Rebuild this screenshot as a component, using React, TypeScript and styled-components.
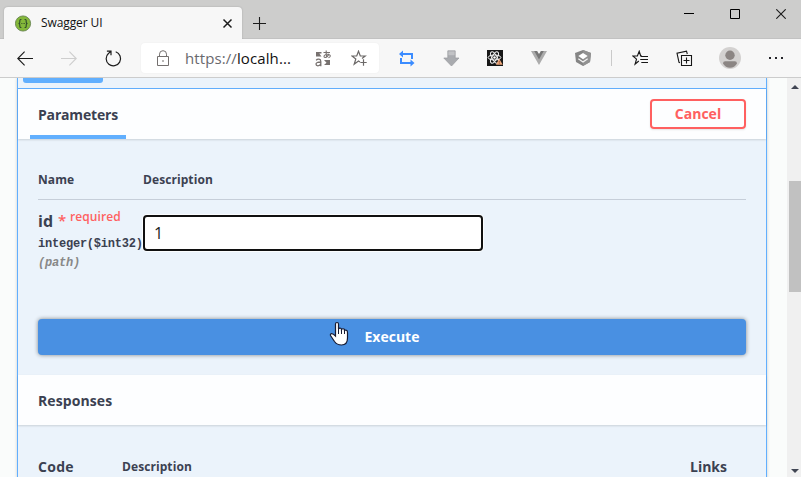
import React from "react";
import styled, { createGlobalStyle } from "styled-components";

const Global = createGlobalStyle`
  * { box-sizing: border-box; }
  html, body { margin: 0; padding: 0; overflow: hidden; }
  body { font-family: "Open Sans", "Noto Sans", sans-serif; color: #3b4151; }
`;

const Window = styled.div`
  width: 801px;
  height: 477px;
  display: flex;
  flex-direction: column;
  overflow: hidden;
  background: #f7f7f7;
`;

const TitleBar = styled.header`
  height: 39px;
  flex: none;
  display: flex;
  align-items: flex-start;
  background: #cdcdcc;
  padding-left: 4px;
  box-shadow: inset 0 -1px 0 #c2c2c2;
`;

const BrowserTab = styled.div`
  width: 238px;
  height: 32px;
  margin-top: 7px;
  padding: 0 9px 0 11px;
  display: flex;
  align-items: center;
  background: #f7f7f7;
  border-radius: 4px 4px 0 0;
  box-shadow: 0 0 2px rgba(0, 0, 0, 0.2);
`;

const TabTitle = styled.span`
  flex: 1;
  margin-left: 9px;
  font-size: 12px;
  line-height: 16px;
  letter-spacing: -0.1px;
  color: #111;
`;

const NewTab = styled.div`
  width: 34px;
  height: 32px;
  margin-top: 7px;
  display: grid;
  place-items: center;
`;

const WindowControls = styled.div`
  margin-left: auto;
  height: 27px;
  display: flex;
  margin-right: -3px;
`;

const ControlButton = styled.div`
  width: 46px;
  display: grid;
  place-items: center;
`;

const Toolbar = styled.nav`
  height: 39px;
  flex: none;
  display: flex;
  align-items: center;
  padding-left: 3px;
  border-bottom: 1px solid #cccccc;
  background: #f7f7f7;
`;

const ToolCell = styled.div<{ $w?: number }>`
  width: ${(p) => p.$w ?? 44}px;
  height: 38px;
  flex: none;
  display: grid;
  place-items: center;
`;

const AddressBar = styled.div`
  width: 238px;
  height: 30px;
  margin: 0 6px;
  padding-left: 15px;
  display: flex;
  align-items: center;
  flex: none;
  background: #fff;
  border-radius: 4px;
  box-shadow: 0 0 2px rgba(0, 0, 0, 0.06);
  svg { flex: none; }
`;

const Url = styled.span`
  flex: none;
  width: 130px;
  margin-left: 15px;
  font-size: 15px;
  line-height: 22px;
  letter-spacing: 0.1px;
  white-space: nowrap;
  color: #111;
  span { color: #69696e; }
`;

const Gap = styled.span<{ $w: number }>`
  width: ${(p) => p.$w}px;
  flex: none;
`;

const Divider = styled.div`
  width: 1px;
  height: 16px;
  background: #cacaca;
`;

const Viewport = styled.main`
  flex: 1;
  min-height: 0;
  display: flex;
  background: #fafcfb;
`;

const Page = styled.div`
  flex: 1;
  padding: 0 20px 0 17px;
  overflow: hidden;
`;

const Operation = styled.section`
  height: 480px;
  border: solid #61affe;
  border-width: 0 1px;
  background: #ebf3fb;
  box-shadow: 0 0 3px rgba(0, 0, 0, 0.19);
`;

const Summary = styled.div`
  height: 11px;
  padding-left: 5px;
  border-bottom: 1px solid #61affe;
`;

const MethodBadge = styled.div`
  width: 80px;
  height: 5px;
  border-radius: 0 0 3px 3px;
  background: #61affe;
`;

const SectionHeader = styled.div`
  height: 50px;
  padding: 0 20px;
  display: flex;
  align-items: center;
  justify-content: space-between;
  background: #fdfeff;
  box-shadow: 0 1px 2px rgba(0, 0, 0, 0.14);
`;

const SectionTab = styled.div`
  align-self: stretch;
  width: 96px;
  margin-left: -8px;
  padding-left: 8px;
  border-bottom: 4px solid #61affe;
`;

const Heading = styled.h4<{ $ls?: number }>`
  margin: 0;
  padding-top: 1px;
  font-size: 14px;
  font-weight: 700;
  line-height: 50px;
  letter-spacing: ${(p) => p.$ls ?? 0}px;
  white-space: nowrap;
`;

const CancelButton = styled.button`
  width: 96px;
  height: 30px;
  padding: 0;
  border: 2px solid #ff6060;
  border-radius: 4px;
  background: transparent;
  color: #ff6060;
  font: 700 14px/26px "Open Sans", sans-serif;
  box-shadow: 0 1px 2px rgba(0, 0, 0, 0.1);
`;

const Parameters = styled.div`
  height: 180px;
  padding: 20px 20px 0;
`;

const ColumnHeads = styled.div`
  height: 41px;
  display: grid;
  grid-template-columns: 105px 1fr;
  border-bottom: 1px solid #c6ced9;
  font-size: 12px;
  font-weight: 700;
  line-height: 41px;
  letter-spacing: 0.08px;
`;

const ParameterRow = styled.div`
  display: grid;
  grid-template-columns: 105px 1fr;
  padding-top: 10px;
`;

const ParameterName = styled.div`
  height: 25px;
  display: flex;
  font-size: 16px;
  font-weight: 700;
  line-height: 22px;
  white-space: nowrap;
`;

const Required = styled.span`
  display: flex;
  margin-left: 5px;
  color: #ff6060;
  font-size: 12px;
  font-weight: 600;
  line-height: 13px;
  letter-spacing: 0.08px;
`;

const Asterisk = styled.span`
  width: 12px;
  padding-top: 3px;
  font-size: 15px;
  line-height: 15px;
`;

const ParameterType = styled.div`
  font: 700 12px/18px "Liberation Mono", monospace;
  letter-spacing: -0.22px;
  white-space: nowrap;
`;

const ParameterIn = styled(ParameterType)`
  line-height: 20px;
  font-style: italic;
  color: #888;
`;

const ValueInput = styled.div`
  width: 340px;
  height: 36px;
  margin-top: 5px;
  padding-left: 9px;
  border: 2px solid #101010;
  border-radius: 4px;
  background: #fff;
  box-shadow: 0 0 0 1px rgba(255, 255, 255, 0.8);
  font: 400 16px/33px "Open Sans", sans-serif;
  color: #222;
`;

const ExecuteRow = styled.div`
  position: relative;
  height: 56px;
  padding: 0 20px 20px;
`;

const ExecuteButton = styled.button`
  display: block;
  width: 100%;
  height: 36px;
  padding: 0;
  border: 0;
  border-radius: 4px;
  background: #4990e2;
  color: #fff;
  font: 700 14px/36px "Open Sans", sans-serif;
  box-shadow: 0 0 4px rgba(0, 0, 0, 0.45);
`;

const Pointer = styled.svg`
  position: absolute;
  left: 311px;
  top: 2px;
`;

const ResponseHeads = styled.div`
  padding: 16px 39px 0 20px;
  display: grid;
  grid-template-columns: 84px 1fr auto;
`;

const SmallHeading = styled(Heading)`
  font-size: 12px;
`;

const Scrollbar = styled.aside`
  width: 14px;
  flex: none;
  display: flex;
  flex-direction: column;
  align-items: center;
  background: #f0f0f0;
  padding: 4px 0 1px 2px;
`;

const Thumb = styled.div`
  width: 12px;
  height: 111px;
  margin: 89px 0 auto;
  background: #c1c1c1;
`;

const Line = ({ w = 16, h = 16, d, c = "#1b1b1b", sw = 1.1 }: { w?: number; h?: number; d: string; c?: string; sw?: number }) => (
  <svg width={w} height={h} viewBox={`0 0 ${w} ${h}`} fill="none" stroke={c} strokeWidth={sw}>
    <path d={d} />
  </svg>
);

const SwaggerLogo = () => (
  <svg width="17" height="17" viewBox="0 0 17 17">
    <circle cx="8" cy="8.5" r="7.6" fill="#84b83a" stroke="#5d7a48" strokeWidth=".8" />
    <g fill="none" stroke="#2f4a2b" strokeWidth="1.1">
      <path d="M6.4 4.5H5.8Q4.8 4.5 4.8 5.8V7.2Q4.8 8.5 3.5 8.5Q4.8 8.5 4.8 9.8V11.2Q4.8 12.5 5.8 12.5H6.4M9.6 4.5H10.2Q11.2 4.5 11.2 5.8V7.2Q11.2 8.5 12.5 8.5Q11.2 8.5 11.2 9.8V11.2Q11.2 12.5 10.2 12.5H9.6" />
      <path d="M6.3 8.5H9.9" strokeDasharray=".8 .6" strokeWidth=".9" />
    </g>
  </svg>
);

const Reload = () => (
  <svg width="17" height="17" viewBox="0 0 17 17" fill="none" stroke="#1b1b1b" strokeWidth="1.2">
    <path d="M10.7 1.8A7.2 7.2 0 1 1 3.6 3.2M1.9 1.1H6V5.2M5.8 1.3L3.4 3.6" />
  </svg>
);

const Lock = () => (
  <svg width="14" height="17" viewBox="0 0 14 17" fill="none" stroke="#74706f">
    <path d="M1.5 6.5H12.5V15.5H1.5ZM3.5 6.5V4.2A3.5 3.5 0 0 1 10.5 4.2V6.5" />
    <path d="M6 10.5H8V11.5H6Z" fill="#74706f" stroke="none" />
  </svg>
);

const Translate = () => (
  <svg width="17" height="17" viewBox="0 0 17 17" fill="none" stroke="#77716f" strokeWidth="1.1">
    <path d="M8.5 2.5H15M11.2 .5Q10.8 5 12 7.4M14 3.8Q12.5 7.6 10.2 7.5Q8.6 7.2 9.2 5.7Q10.5 3.8 13.6 4.5Q16.2 5.3 14.8 7Q14.3 7.6 13.3 7.8" />
    <path d="M1.2 10.3Q2 9 4 9.2Q5.8 9.4 5.8 11.5V16.2M5.8 12Q1 12 1 14.1Q1 15.8 2.8 15.8Q5.2 15.8 5.8 13.8" strokeWidth="1.3" />
    <path d="M1 2H6.5V3.5H4.3L6.5 6.5H1ZM9 10H15V15H9L11.5 12.7Z" fill="#77716f" stroke="none" />
  </svg>
);

const StarPlus = () => (
  <svg width="17" height="17" viewBox="0 0 17 17" fill="none" stroke="#6b6867" strokeWidth="1.2">
    <path d="M9 12L7.5 11L3.2 14.2L4.8 9L.9 6H5.7L7.5 1.2L9.3 6H14.2L11 8.5M9.3 12.5H15.7M12.5 9.3V15.7" />
  </svg>
);

const Loop = () => (
  <svg width="16" height="17" viewBox="0 0 16 17" fill="none" stroke="#3b8cff" strokeWidth="2">
    <path d="M3 4H13V9M13 13H2V8" />
    <path d="M0 4L4 .5V7.5ZM15.5 13L11.5 9.5V16.5Z" fill="#3b8cff" stroke="none" />
  </svg>
);

const Download = () => (
  <svg width="17" height="17" viewBox="0 0 17 17">
    <path d="M4.8 .8H12.2V8H16L8.5 16L.8 8H4.8Z" fill="#a9abaf" stroke="#989a9e" strokeWidth=".7" />
    <path d="M5.4 1.4H11.6V5.2H5.4Z" fill="#c1c2c5" />
  </svg>
);

const ReactTools = () => (
  <svg width="16" height="16" viewBox="0 0 16 16">
    <rect width="16" height="16" fill="#171717" />
    <g fill="none" stroke="#f4f4f4" strokeWidth="1">
      <ellipse cx="7.5" cy="7.5" rx="6.4" ry="2.5" />
      <ellipse cx="7.5" cy="7.5" rx="6.4" ry="2.5" transform="rotate(60 7.5 7.5)" />
      <ellipse cx="7.5" cy="7.5" rx="6.4" ry="2.5" transform="rotate(120 7.5 7.5)" />
    </g>
    <circle cx="7.5" cy="7.5" r="1.3" fill="#fff" />
    <path d="M12.2 8.8L15.8 14.8H8.9Z" fill="#eda77b" />
    <path d="M12.3 10.8V12.7M12.3 13.3V14.2" stroke="#8b4d30" strokeWidth=".8" />
  </svg>
);

const VueTools = () => (
  <svg width="16" height="14" viewBox="0 0 16 14">
    <path d="M0 0H6L8 3.3L10 0H16L8 14Z" fill="#acacac" />
    <path d="M3.2 0H6L8 3.3L10 0H12.8L8 8.5Z" fill="#777" />
  </svg>
);

const ShieldTools = () => (
  <svg width="16" height="16" viewBox="0 0 16 16">
    <path d="M8 0L16 3L15 12L8 16L1 12L0 3Z" fill="#858585" />
    <path d="M8 0L16 3L15 12L8 16Z" fill="#929292" />
    <path d="M8 3L12.7 6L8 9.2L3.3 6Z" fill="#fff" />
    <path d="M3.3 8.7L8 11.9L12.7 8.7" fill="none" stroke="#f4f4f4" strokeWidth="1.2" />
  </svg>
);

const Favorites = () => (
  <svg width="17" height="17" viewBox="0 0 17 17" fill="none" stroke="#171717" strokeWidth="1.15">
    <path d="M6.8 11L3.1 14.1L4.5 9.1L.8 6H5.4L7.2 1.3L8.7 6H10M8.8 6.5H16M8.2 9.5H16M9.3 12.5H16" />
  </svg>
);

const Collections = () => (
  <svg width="17" height="17" viewBox="0 0 17 17" fill="none" stroke="#171717" strokeWidth="1.1">
    <path d="M5.5 5.5H15.5V15.5H5.5ZM10.5 7.5V13.5M7.5 10.5H13.5" />
    <path d="M4 12.7L3 12.3L1 3.2L10.5 1.1L11.3 4" />
  </svg>
);

const Avatar = () => (
  <svg width="22" height="22" viewBox="0 0 22 22">
    <circle cx="11" cy="11" r="11" fill="#d3d1d0" />
    <circle cx="11" cy="8.2" r="4.7" fill="#8b8583" />
    <path d="M4 16.5Q4 14.3 6.2 14.3H15.8Q18 14.3 18 16.5Q15.5 20.7 11 20.7Q6.5 20.7 4 16.5Z" fill="#8b8583" />
  </svg>
);

const Triangle = ({ d }: { d: string }) => (
  <svg width="8" height="10" viewBox="0 0 8 10"><path d={d} fill="#404553" /></svg>
);

export default function App() {
  return (
    <Window>
      <Global />
      <TitleBar>
        <BrowserTab>
          <SwaggerLogo />
          <TabTitle>Swagger UI</TabTitle>
          <Line w={11} h={11} d="M1.5 1.5L9.5 9.5M9.5 1.5L1.5 9.5" sw={1.5} />
        </BrowserTab>
        <NewTab><Line w={13} h={13} d="M6.5 0V13M0 6.5H13" /></NewTab>
        <WindowControls>
          <ControlButton><Line w={10} h={11} d="M0 5.5H10" sw={1} c="#000" /></ControlButton>
          <ControlButton><Line w={10} h={10} d="M.5 .5H9.5V9.5H.5Z" sw={1} c="#000" /></ControlButton>
          <ControlButton><Line w={10} h={10} d="M.3 .3L9.7 9.7M9.7 .3L.3 9.7" /></ControlButton>
        </WindowControls>
      </TitleBar>

      <Toolbar>
        <ToolCell><Line w={16} h={15} d="M16 7.5H1M7.6 .7L.8 7.5L7.6 14.3" /></ToolCell>
        <ToolCell><Line w={16} h={15} d="M0 7.5H15M8.4 .7L15.2 7.5L8.4 14.3" c="#cecece" /></ToolCell>
        <ToolCell><Reload /></ToolCell>
        <AddressBar>
          <Lock />
          <Url><span>https://</span>localh...</Url>
          <Translate />
          <Gap $w={19} />
          <StarPlus />
        </AddressBar>
        <ToolCell><Loop /></ToolCell>
        <ToolCell><Download /></ToolCell>
        <ToolCell><ReactTools /></ToolCell>
        <ToolCell><VueTools /></ToolCell>
        <ToolCell><ShieldTools /></ToolCell>
        <ToolCell $w={13}><Divider /></ToolCell>
        <ToolCell><Favorites /></ToolCell>
        <ToolCell><Collections /></ToolCell>
        <ToolCell $w={48}><Avatar /></ToolCell>
        <ToolCell $w={44}>
          <svg width="14" height="2" viewBox="0 0 14 2"><path d="M0 0H2V2H0ZM6 0H8V2H6ZM12 0H14V2H12Z" fill="#24242a" /></svg>
        </ToolCell>
      </Toolbar>

      <Viewport>
        <Page>
          <Operation>
            <Summary><MethodBadge /></Summary>
            <SectionHeader>
              <SectionTab><Heading $ls={-0.18}>Parameters</Heading></SectionTab>
              <CancelButton>Cancel</CancelButton>
            </SectionHeader>
            <Parameters>
              <ColumnHeads><span>Name</span><span>Description</span></ColumnHeads>
              <ParameterRow>
                <div>
                  <ParameterName>id<Required><Asterisk>*</Asterisk>required</Required></ParameterName>
                  <ParameterType>integer($int32)</ParameterType>
                  <ParameterIn>(path)</ParameterIn>
                </div>
                <ValueInput>1</ValueInput>
              </ParameterRow>
            </Parameters>
            <ExecuteRow>
              <ExecuteButton>Execute</ExecuteButton>
              <Pointer width="20" height="25" viewBox="0 0 20 25">
                <path d="M6.5 15V3Q6.5 1.5 8 1.5Q9.5 1.5 9.5 3V8Q10.2 6.6 11.7 7.2Q12.5 7.5 12.5 8.5Q13.5 7.3 15 8Q15.5 8.4 15.5 9.3Q17 8.6 18 9.7Q18.5 10.3 18.5 12V17Q18.5 24 12.5 24Q8 24 5.5 20.5L1.5 14.5Q1 13 2.5 12.6Q4 12.4 6.5 15Z" fill="#fff" stroke="#171b33" strokeWidth="1.2" />
                <path d="M9.5 7V13M12.5 8V13M15.5 9V13" stroke="#171b33" fill="none" />
              </Pointer>
            </ExecuteRow>
            <SectionHeader><Heading $ls={0.1}>Responses</Heading></SectionHeader>
            <ResponseHeads>
              <Heading $ls={0.3}>Code</Heading>
              <SmallHeading $ls={0.08}>Description</SmallHeading>
              <Heading>Links</Heading>
            </ResponseHeads>
          </Operation>
        </Page>
        <Scrollbar>
          <Triangle d="M0 7L4 3L8 7Z" />
          <Thumb />
          <Triangle d="M0 3L4 7L8 3Z" />
        </Scrollbar>
      </Viewport>
    </Window>
  );
}
